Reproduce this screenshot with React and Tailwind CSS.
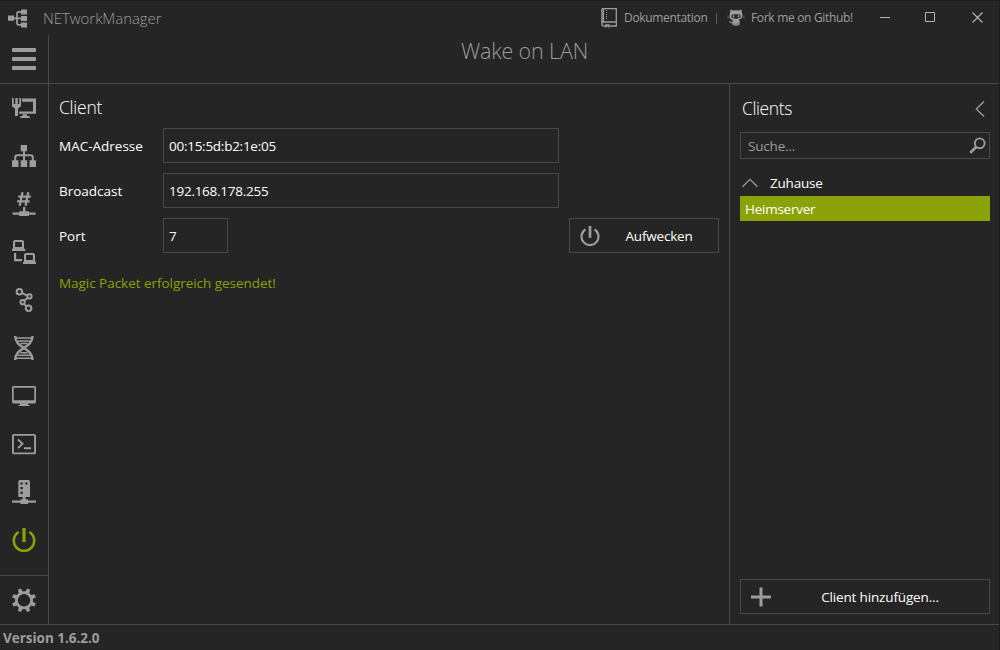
import React from "react";

function Icon({ size = "size-6", children }) {
  return (
    <svg viewBox="0 0 24 24" className={`${size} shrink-0`} fill="currentColor" stroke="none" aria-hidden="true">
      {children}
    </svg>
  );
}

const NetworkInterface = () => (
  <Icon>
    <path d="M0 2h1.7v6h1.6V2h2.4v6h1.6V2H9v8.2L6 12.500V20H3v-7.500L0 10.200z" />
    <path d="M10 2.600h14v15.200H7V15.400h14V5.800H10z" />
    <path d="M10.500 18.200h4.600V20h2.600v2H8.300v-2h2.200z" />
  </Icon>
);

const IpScanner = () => (
  <Icon>
    <path d="M8.700 1H15v6.300H8.700zM0 16.300h6.500V23H0zM8.700 16.300h6.500V23H8.700zM17.500 16.300H24V23h-6.500z" />
    <path d="M12 7v10M3.200 17v-3.500q0-2.300 2.300-2.300h13q2.300 0 2.300 2.300V17" fill="none" stroke="currentColor" strokeWidth="2" />
  </Icon>
);

const PortScanner = () => (
  <Icon>
    <path d="M10.500.2 7.700 13.800M16.300.2l-2.800 13.600M6.300 4.700h12.600M5.100 9.400h12.600" fill="none" stroke="currentColor" strokeWidth="2.300" />
    <path d="M11 15h2.400v4.200H17v1.200h6.600v2.400H17V24H7.200v-1.200H.6v-2.400h6.600v-1.200H11z" />
  </Icon>
);

const Ping = () => (
  <Icon>
    <path fillRule="evenodd" d="M2.400 0h8.200L12 1.400V9H1V1.400zM3.100 2v5h6.800V2z" />
    <path d="M0 8.700h13.300V11H0zM2 13h2.200v6h5.800v2.200H2z" />
    <path fillRule="evenodd" d="M13.400 13h8.200l1.400 1.400V22H12v-7.600zM14.100 15v5h6.800v-5z" />
    <path d="M11 21.700h13V24H11z" />
  </Icon>
);

const Traceroute = () => (
  <Icon>
    <g fill="none" stroke="currentColor" strokeWidth="2">
      <circle cx="7.400" cy="3.800" r="2.800" />
      <circle cx="17.500" cy="8.400" r="2.100" />
      <circle cx="10.600" cy="14.200" r="2.100" />
      <circle cx="16.600" cy="20.200" r="2.800" />
      <path d="m10 5.100 5.500 2.500M15.700 9.800l-3.400 2.900M12 16l2.400 2.100" />
    </g>
  </Icon>
);

const Dna = () => (
  <Icon>
    <g fill="none" stroke="currentColor">
      <path strokeWidth="2.400" d="M3.200 0c0 13 17.300 11 17.300 24M20.500 0C20.500 13 3.200 11 3.200 24" />
      <path strokeWidth="1.400" d="M4 2h15.600M6 5h12M8.500 7.500h7M8.500 16.800h7M6 19.300h12M4 22.200h15.600" />
    </g>
  </Icon>
);

const RemoteDesktop = () => (
  <Icon>
    <path fillRule="evenodd" d="M1.200 2h21.600L24 3v15.200l-1 1.200H1l-1-1.200V3zM1.700 3.700v12.500h20.600V3.700z" />
    <path d="M8 19.300h8v1.300l2.300 1.500H5.700L8 20.600z" />
  </Icon>
);

const Console = () => (
  <Icon>
    <g fill="none" stroke="currentColor" strokeWidth="1.900">
      <rect x=".95" y="2.900" width="22.100" height="18.500" rx="1" />
      <path d="m6 7.500 4.500 4.300L6 16.100M12 16.200h7" />
    </g>
  </Icon>
);

const Snmp = () => (
  <Icon>
    <path fillRule="evenodd" d="M7.400 0h9.500L18 1.200V17H6.300V1.200zM8.400 2.400v2.200h2.300V2.400zM13.300 2.400v2.200h2.200V2.400zM8.400 7v2.300h2.300V7zM8.400 11.800V14h2.300v-2.200z" />
    <path d="M10.600 17h2.900v2.300H16v1.200h8v2.200h-8V24H8.500v-1.300H0v-2.200h8.500v-1.200h2.100z" />
  </Icon>
);

const Power = ({ size }) => (
  <Icon size={size}>
    <g fill="none" stroke="currentColor">
      <path strokeWidth="2.600" d="M6.600 4A10.200 10.200 0 1 0 17.400 4" />
      <path strokeWidth="3.200" d="M12 0v14.200" />
    </g>
  </Icon>
);

const gearTeeth = [22.5, 67.5, 112.5, 157.5, 202.5, 247.5, 292.5, 337.5];

const Gear = () => (
  <Icon>
    <circle cx="12" cy="12.300" r="7.600" fill="none" stroke="currentColor" strokeWidth="2.800" />
    {gearTeeth.map((a) => (
      <path key={a} d="M9.800 4.500 10.400.2h3.200l.6 4.300z" transform={`rotate(${a} 12 12.3)`} />
    ))}
  </Icon>
);

const Logo = () => (
  <svg viewBox="0 0 19 19" className="size-[19px] shrink-0" fill="currentColor" aria-hidden="true">
    <path d="M0 6.500h6v5.200H0zM13 .4h6v5h-6zM13 7h6v5h-6zM13 13.600h6v5h-6z" />
    <path d="M5 9.300h9M14 2.800h-3.200q-1.800 0-1.800 2v9q0 2 1.800 2H14" fill="none" stroke="currentColor" strokeWidth="1.700" />
  </svg>
);

const Book = () => (
  <svg viewBox="0 0 16 20" className="h-5 w-4 shrink-0" fill="none" stroke="currentColor" aria-hidden="true">
    <path d="M.9 16V1.500Q.9.700 1.800.700h13.500V14H3Q.9 14 .9 16t2.100 2h1M9 18h6.300v-4" strokeWidth="1.300" />
    <path d="M2.300 1v13" strokeWidth="1.500" />
    <path d="M5.500 2v10" strokeWidth="1" strokeDasharray="1 1" />
    <path d="M4.200 16.200h4.400V20L6.400 18.600 4.200 20z" fill="currentColor" stroke="none" />
  </svg>
);

const Octocat = () => (
  <svg viewBox="0 0 18 18" className="size-[18px] shrink-0" fill="currentColor" aria-hidden="true">
    <path fillRule="evenodd" d="M3.600.5 6 1.600q3-.6 6 0L14.400.5q.8 1.600.3 3.100 1 1.200.8 3.200-.2 3-3.600 3.600.7.700.7 1.800V16h-1.400v-2.100h-.5V17H9.300v-2.400h-.6V17H7.300v-2.600h-.5V16H5.400v-1.800q-2 .4-2.700-1.500l-.9-.9q1.300-.2 2 .9.700.8 1.700.3.100-.9.600-1.300Q2.700 10.300 2.500 7.300q-.1-2 .8-3.200Q2.800 2.100 3.600.500zM5.500 5.600q-1.300.4-1.200 2 .1 2.100 4.700 2.100t4.700-2.100q.1-1.600-1.200-2-3.500-.5-7 0z" />
    <path d="M5.800 6.300h1.500v2.200H5.800zM10.700 6.300h1.500v2.200h-1.500z" />
    <path d="m0 7 2.500.4M0 9.300l2.700-.7M15.500 7.400 18 7M15.300 8.600l2.700.7" stroke="currentColor" strokeWidth=".35" />
  </svg>
);

const tools = [
  NetworkInterface,
  IpScanner,
  PortScanner,
  Ping,
  Traceroute,
  Dna,
  RemoteDesktop,
  Console,
  Snmp,
  Power,
];

function Sidebar() {
  return (
    <nav className="flex w-[49px] shrink-0 flex-col border-r border-[#484848]">
      <button className="flex h-[49px] flex-col items-center justify-center gap-[5px] border-b border-[#484848]">
        <span className="h-1 w-6 rounded-[1px] bg-[#9d9d9d]" />
        <span className="h-1 w-6 rounded-[1px] bg-[#9d9d9d]" />
        <span className="h-1 w-6 rounded-[1px] bg-[#9d9d9d]" />
      </button>
      {tools.map((Tool, i) => (
        <button
          key={i}
          className={`flex h-12 shrink-0 items-center justify-center ${i === 9 ? "text-[#8ba208]" : "text-[#9d9d9d]"}`}
        >
          <Tool />
        </button>
      ))}
      <button className="mt-auto flex h-[49px] items-center justify-center border-t border-[#484848]">
        <Gear />
      </button>
    </nav>
  );
}

function Field({ label, value, width }) {
  return (
    <div className="flex h-[35px] items-center">
      <span className="w-[104px] shrink-0 pt-0.5 tracking-[0px]">{label}</span>
      <div className={`flex h-[35px] items-center border border-[#484848] pt-0.5 pl-[5px] tracking-[-0.26px] ${width}`}>
        {value}
      </div>
    </div>
  );
}

function ClientForm() {
  return (
    <main className="flex min-w-0 flex-1 flex-col px-[10px] pt-[9px]">
      <h2 className="h-[35px] text-[17.500px] leading-[28px] font-light tracking-[-0.25px]">Client</h2>
      <div className="flex flex-col gap-[10px]">
        <Field label="MAC-Adresse" value="00:15:5d:b2:1e:05" width="w-[396px]" />
        <Field label="Broadcast" value="192.168.178.255" width="w-[396px]" />
        <div className="flex justify-between">
          <Field label="Port" value="7" width="w-[65px]" />
          <button className="flex h-[35px] w-[150px] items-center border border-[#484848] pl-[10px]">
            <span className="text-[#9d9d9d]">
              <Power size="size-5" />
            </span>
            <span className="flex-1 pt-0.5 text-center">Aufwecken</span>
          </button>
        </div>
      </div>
      <p className="mt-[20px] leading-5 tracking-[-0.04px] text-[#8ba208]">Magic Packet erfolgreich gesendet!</p>
    </main>
  );
}

function ClientList() {
  return (
    <aside className="flex w-[270px] shrink-0 flex-col border-l border-[#484848] pr-[9px] pb-[10px] pl-[10px]">
      <div className="flex h-12 items-center justify-between pt-[1px] pr-[5px] pl-[2px]">
        <h2 className="text-[17.500px] font-light tracking-[-0.400px]">Clients</h2>
        <svg viewBox="0 0 10 16" className="h-4 w-[10px] text-[#9d9d9d]" fill="none" stroke="currentColor" strokeWidth="1.300">
          <path d="M9 .5 1.300 8 9 15.500" />
        </svg>
      </div>
      <div className="flex h-[27px] items-center justify-between border border-[#484848] pr-[3px] pl-[7px] text-[#9d9d9d]">
        <span className="pt-0.5">Suche...</span>
        <svg viewBox="0 0 17 17" className="size-[17px]" fill="none" stroke="currentColor">
          <circle cx="10.700" cy="6.300" r="4.900" strokeWidth="1.900" />
          <path d="M7.300 9.700 1.300 15.700" strokeWidth="2.700" />
        </svg>
      </div>
      <div className="mt-[11px] flex h-[26px] items-center pl-[2px]">
        <svg viewBox="0 0 16 10" className="h-[10px] w-4 text-[#9d9d9d]" fill="none" stroke="currentColor" strokeWidth="1.300">
          <path d="M.5 8.700 8 1.300l7.500 7.400" />
        </svg>
        <span className="ml-3">Zuhause</span>
      </div>
      <div className="flex h-[25px] items-center bg-[#8ba208] pt-0.5 pl-[5px] tracking-[-0.26px]">Heimserver</div>
      <button className="mt-auto flex h-[35px] items-center border border-[#484848] pl-[10px]">
        <svg viewBox="0 0 20 20" className="size-5 text-[#9d9d9d]" fill="none" stroke="currentColor" strokeWidth="3">
          <path d="M10 .5v19M0 10h20" />
        </svg>
        <span className="flex-1 pt-0.5 text-center tracking-[-0.150px]">Client hinzufügen...</span>
      </button>
    </aside>
  );
}

function TitleBar() {
  return (
    <header className="flex h-[34px] shrink-0 items-center justify-between">
      <div className="flex items-center pl-2">
        <Logo />
        <span className="ml-4 text-[15px] font-light tracking-[-0.050px]">NETworkManager</span>
      </div>
      <div className="flex shrink-0 items-center text-[12px] tracking-[-0.320px] whitespace-nowrap">
        <Book />
        <span className="ml-[7px] w-[83px] shrink-0">Dokumentation</span>
        <span className="ml-[9px] h-[11px] w-px shrink-0 bg-[#5c5c5c]" />
        <span className="ml-[10px] flex shrink-0">
          <Octocat />
        </span>
        <span className="ml-[6px] w-[103px] shrink-0">Fork me on Github!</span>
        <svg viewBox="0 0 126 20" className="ml-[19px] h-5 w-[126px] shrink-0" fill="none" stroke="#b4b4b4">
          <path d="M7 9.500h10" />
          <path d="M52.500 4.500h9v9h-9z" />
          <path d="m99.500 4.500 10 10m0-10-10 10" strokeWidth="1.200" />
        </svg>
      </div>
    </header>
  );
}

export default function App() {
  return (
    <div className="flex h-[650px] w-[1000px] flex-col overflow-hidden border-t border-r border-[#1c1c1c] bg-[#252525] font-['Open_Sans','Noto_Sans',sans-serif] text-[13.500px] tracking-[-0.2px] text-[#9d9d9d]">
      <TitleBar />
      <div className="flex min-h-0 flex-1">
        <Sidebar />
        <div className="flex min-w-0 flex-1 flex-col">
          <h1 className="flex h-[49px] shrink-0 justify-center border-b border-[#484848] pl-px text-[21.500px] leading-[32px] font-light tracking-[-0.150px]">
            Wake on LAN
          </h1>
          <div className="flex min-h-0 flex-1 text-white">
            <ClientForm />
            <ClientList />
          </div>
        </div>
      </div>
      <footer className="flex h-[26px] shrink-0 items-center border-t border-[#484848] pt-0.5 pl-[3px] text-[13.500px] font-bold tracking-[-0.020px]">
        Version 1.6.2.0
      </footer>
    </div>
  );
}
